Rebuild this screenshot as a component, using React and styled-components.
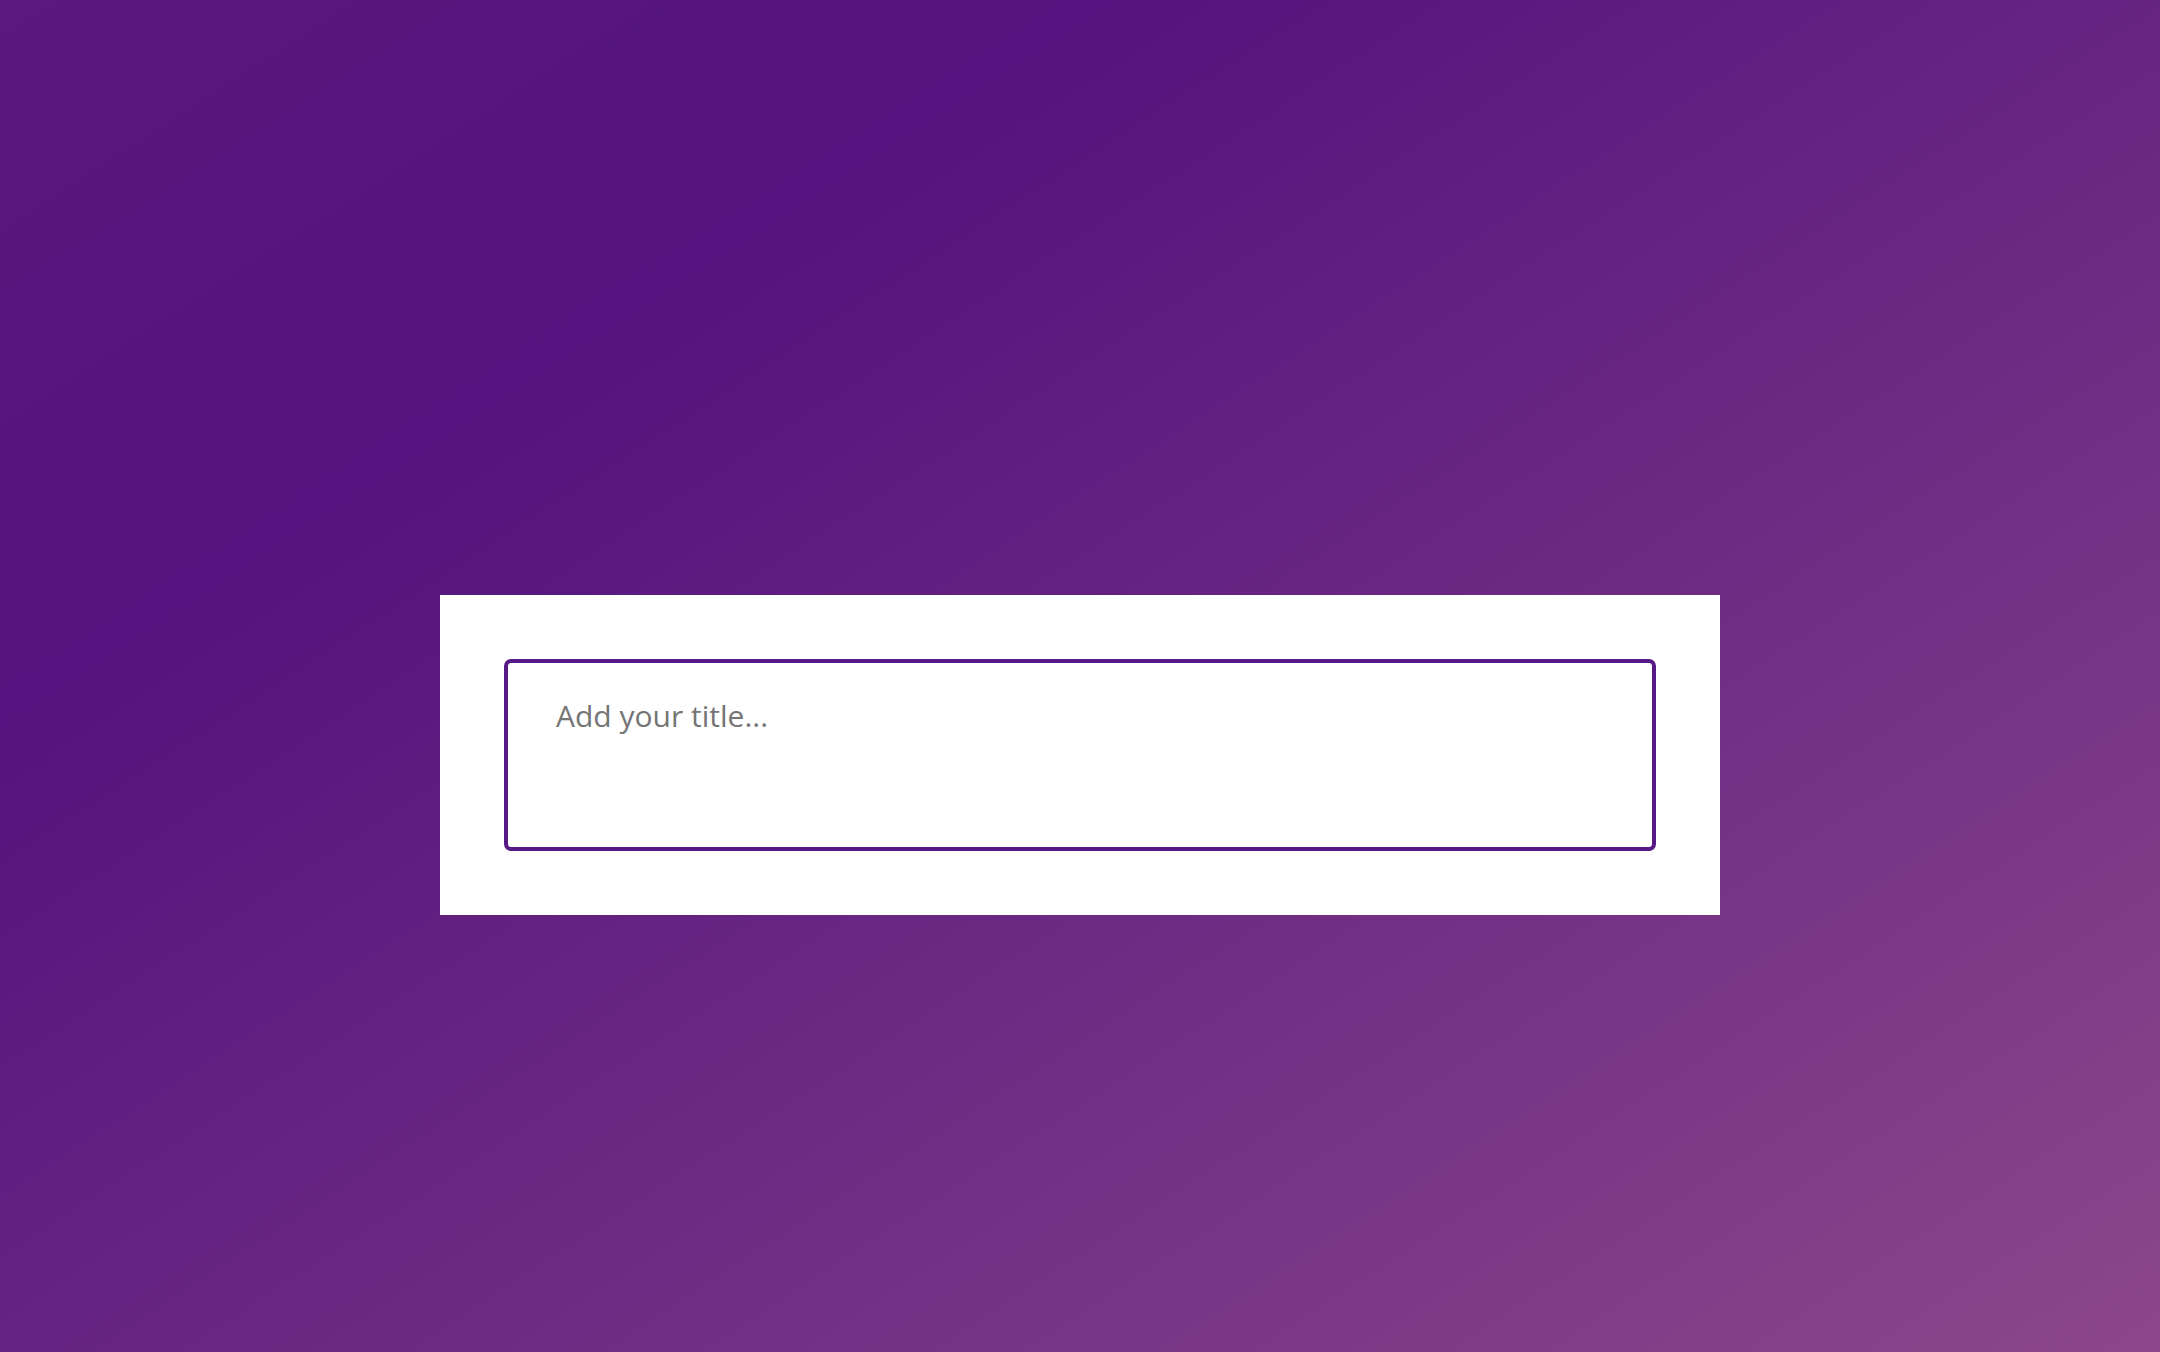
import styled, { createGlobalStyle } from 'styled-components';

const GlobalStyle = createGlobalStyle`
  html, body {
    margin: 0;
    padding: 0;
  }
  body {
    font-family: 'Open Sans', 'Liberation Sans', sans-serif;
  }
  * {
    box-sizing: border-box;
  }
`;

const Page = styled.main`
  min-height: 100vh;
  display: flex;
  justify-content: center;
  align-items: flex-start;
  padding-top: 595px;
  background: linear-gradient(147deg, #59197f 0%, #54137e 26%, #8c478a 100%);
`;

const Card = styled.section`
  width: 1280px;
  background: #ffffff;
  padding: 64px;
`;

const TitleInput = styled.textarea`
  display: block;
  width: 100%;
  height: 192px;
  border: 4px solid #561a86;
  border-radius: 7px;
  padding: 31px 48px;
  font-family: 'Open Sans', 'Liberation Sans', sans-serif;
  font-size: 30px;
  line-height: 1.45;
  color: #333;
  resize: none;
  outline: none;

  &::placeholder {
    color: #757575;
  }
`;

export default function App() {
  return (
    <>
      <GlobalStyle />
      <Page>
        <Card>
          <TitleInput placeholder="Add your title..." />
        </Card>
      </Page>
    </>
  );
}
